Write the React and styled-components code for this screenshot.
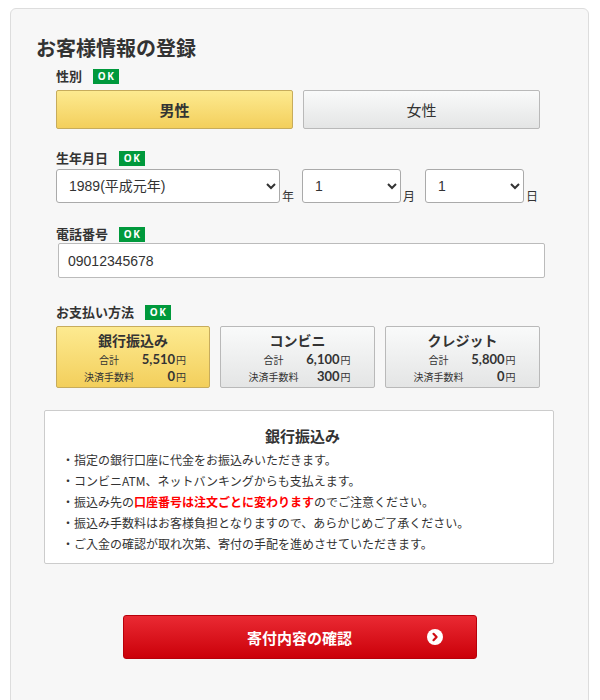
import React from "react";
import styled, { createGlobalStyle } from "styled-components";

const GlobalStyle = createGlobalStyle`
  body {
    margin: 0;
    background: #fff;
    font-family: "Noto Sans CJK JP", "Noto Sans", sans-serif;
    color: #333;
  }
`;

const Panel = styled.div`
  margin: 8px 10px 0;
  width: 579px;
  box-sizing: border-box;
  min-height: 720px;
  background: #f7f7f7;
  border: 1px solid #ddd;
  border-radius: 6px;
  padding: 25px 0 0 25px;
`;

const Title = styled.h2`
  margin: 0;
  font-size: 20px;
  line-height: 28px;
  font-weight: bold;
  color: #333;
`;

const Fields = styled.div`
  padding-left: 20px;
  width: 484px;
`;

const Field = styled.div`
  margin-top: ${(p) => p.$top}px;
`;

const LabelRow = styled.div`
  display: flex;
  align-items: center;
  height: 16px;
  margin-bottom: ${(p) => p.$gap}px;
`;

const Label = styled.span`
  font-size: 13px;
  font-weight: bold;
  line-height: 16px;
`;

const Ok = styled.span`
  margin-left: 11px;
  width: 26px;
  height: 15px;
  background: #00993c;
  color: #fff;
  font-family: "Noto Sans", sans-serif;
  font-size: 10px;
  font-weight: bold;
  letter-spacing: 1.5px;
  display: flex;
  align-items: center;
  justify-content: center;
  padding-left: 1px;
  box-sizing: border-box;
`;

const ToggleRow = styled.div`
  display: grid;
  grid-template-columns: 1fr 1fr;
  gap: 10px;
`;

const selectedBg = "linear-gradient(#fdea90, #f3cf5c)";
const plainBg = "linear-gradient(#f9fafa, #e4e5e5)";

const Toggle = styled.div`
  height: 39px;
  box-sizing: border-box;
  border: 1px solid ${(p) => (p.$on ? "#c7ac5c" : "#b9b9b9")};
  border-radius: 2px;
  background: ${(p) => (p.$on ? selectedBg : plainBg)};
  display: flex;
  align-items: center;
  justify-content: center;
  font-size: 15px;
  font-weight: ${(p) => (p.$on ? "bold" : "normal")};
  color: #333;
`;

const DateRow = styled.div`
  display: flex;
  align-items: flex-end;
`;

const Select = styled.select`
  width: ${(p) => p.$w}px;
  height: 34px;
  box-sizing: border-box;
  border: 1px solid #aaa;
  border-radius: 3px;
  background: #fff;
  padding: 0 0 0 8px;
  font-family: "Liberation Sans", "Noto Sans CJK JP", sans-serif;
  font-size: 14px;
  color: #333;
`;

const Unit = styled.span`
  font-size: 12px;
  line-height: 12px;
  margin: 0 ${(p) => p.$after}px 1px 2px;
`;

const TextInput = styled.input`
  display: block;
  margin-left: 2px;
  width: 487px;
  height: 35px;
  box-sizing: border-box;
  border: 1px solid #bbb;
  border-radius: 2px;
  background: #fff;
  padding: 0 9px;
  font-family: "Liberation Sans", "Noto Sans CJK JP", sans-serif;
  font-size: 14px;
  color: #333;
`;

const Cards = styled.div`
  display: grid;
  grid-template-columns: 154px 155px 155px;
  gap: 10px;
`;

const Card = styled.div`
  height: 62px;
  box-sizing: border-box;
  border: 1px solid ${(p) => (p.$on ? "#c7ac5c" : "#b9b9b9")};
  border-radius: 2px;
  background: ${(p) => (p.$on ? selectedBg : plainBg)};
  display: flex;
  flex-direction: column;
  align-items: center;
  padding-top: 3px;
`;

const CardTitle = styled.div`
  font-size: 14px;
  font-weight: bold;
  line-height: 20px;
  margin-bottom: 2px;
`;

const PriceGrid = styled.div`
  display: grid;
  grid-template-columns: auto 48px;
  column-gap: 4px;
  row-gap: 2px;
  margin-left: 4px;
`;

const PriceLabel = styled.span`
  font-size: 10px;
  line-height: 14px;
  text-align: center;
  align-self: end;
`;

const Amount = styled.span`
  text-align: right;
  font-family: Lato, "Noto Sans CJK JP", sans-serif;
  font-size: 13px;
  font-weight: bold;
  line-height: 14px;
  small {
    font-family: "Noto Sans CJK JP", sans-serif;
    font-size: 10px;
    font-weight: normal;
    margin-left: 1px;
  }
`;

const InfoBox = styled.div`
  margin: 22px 0 0 8px;
  width: 510px;
  box-sizing: border-box;
  background: #fff;
  border: 1px solid #ccc;
  border-radius: 2px;
  padding: 13px 10px 9px 17px;
`;

const InfoTitle = styled.div`
  text-align: center;
  font-size: 15px;
  font-weight: bold;
  line-height: 24px;
`;

const List = styled.ul`
  list-style: none;
  margin: 1px 0 0;
  padding: 0;
`;

const Item = styled.li`
  font-size: 12px;
  line-height: 21px;
  color: #333;
  &::before {
    content: "・";
  }
  strong {
    color: #f00;
  }
`;

const ButtonWrap = styled.div`
  display: flex;
  justify-content: center;
  padding: 51px 25px 0 0;
`;

const Submit = styled.button`
  position: relative;
  width: 354px;
  height: 44px;
  border: 1px solid #b8000a;
  border-radius: 3px;
  background: linear-gradient(#ea2a33, #cb0009);
  color: #fff;
  font-family: "Noto Sans CJK JP", sans-serif;
  font-size: 15px;
  font-weight: bold;
  cursor: pointer;
`;

const Arrow = styled.svg`
  position: absolute;
  right: 33px;
  top: 13px;
`;

const payments = [
  { name: "銀行振込み", total: "5,510", fee: "0", on: true },
  { name: "コンビニ", total: "6,100", fee: "300" },
  { name: "クレジット", total: "5,800", fee: "0" },
];

const notes = [
  "指定の銀行口座に代金をお振込みいただきます。",
  "コンビニATM、ネットバンキングからも支払えます。",
  null,
  "振込み手数料はお客様負担となりますので、あらかじめご了承ください。",
  "ご入金の確認が取れ次第、寄付の手配を進めさせていただきます。",
];

export default function App() {
  return (
    <>
      <GlobalStyle />
      <Panel>
        <Title>お客様情報の登録</Title>
        <Fields>
          <Field $top={6}>
            <LabelRow $gap={6}>
              <Label>性別</Label>
              <Ok>OK</Ok>
            </LabelRow>
            <ToggleRow>
              <Toggle $on>男性</Toggle>
              <Toggle>女性</Toggle>
            </ToggleRow>
          </Field>

          <Field $top={21}>
            <LabelRow $gap={3}>
              <Label>生年月日</Label>
              <Ok>OK</Ok>
            </LabelRow>
            <DateRow>
              <Select $w={224} defaultValue="1989">
                <option value="1989">1989(平成元年)</option>
              </Select>
              <Unit $after={8}>年</Unit>
              <Select $w={99} defaultValue="1">
                <option value="1">1</option>
              </Select>
              <Unit $after={10}>月</Unit>
              <Select $w={99} defaultValue="1">
                <option value="1">1</option>
              </Select>
              <Unit $after={0}>日</Unit>
            </DateRow>
          </Field>

          <Field $top={23}>
            <LabelRow $gap={1}>
              <Label>電話番号</Label>
              <Ok>OK</Ok>
            </LabelRow>
            <TextInput defaultValue="09012345678" />
          </Field>

          <Field $top={26}>
            <LabelRow $gap={6}>
              <Label>お支払い方法</Label>
              <Ok>OK</Ok>
            </LabelRow>
            <Cards>
              {payments.map((p) => (
                <Card key={p.name} $on={p.on}>
                  <CardTitle>{p.name}</CardTitle>
                  <PriceGrid>
                    <PriceLabel>合計</PriceLabel>
                    <Amount>
                      {p.total}
                      <small>円</small>
                    </Amount>
                    <PriceLabel>決済手数料</PriceLabel>
                    <Amount>
                      {p.fee}
                      <small>円</small>
                    </Amount>
                  </PriceGrid>
                </Card>
              ))}
            </Cards>
          </Field>
        </Fields>

        <InfoBox>
          <InfoTitle>銀行振込み</InfoTitle>
          <List>
            {notes.map((n, i) =>
              n ? (
                <Item key={i}>{n}</Item>
              ) : (
                <Item key={i}>
                  振込み先の<strong>口座番号は注文ごとに変わります</strong>のでご注意ください。
                </Item>
              )
            )}
          </List>
        </InfoBox>

        <ButtonWrap>
          <Submit type="button">
            寄付内容の確認
            <Arrow width="16" height="16" viewBox="0 0 16 16">
              <circle cx="8" cy="8" r="8" fill="#fff" />
              <path
                d="M6.5 4.8 L9.6 8 L6.5 11.2"
                fill="none"
                stroke="#d10c14"
                strokeWidth="2.2"
                strokeLinecap="round"
                strokeLinejoin="round"
              />
            </Arrow>
          </Submit>
        </ButtonWrap>
      </Panel>
    </>
  );
}
